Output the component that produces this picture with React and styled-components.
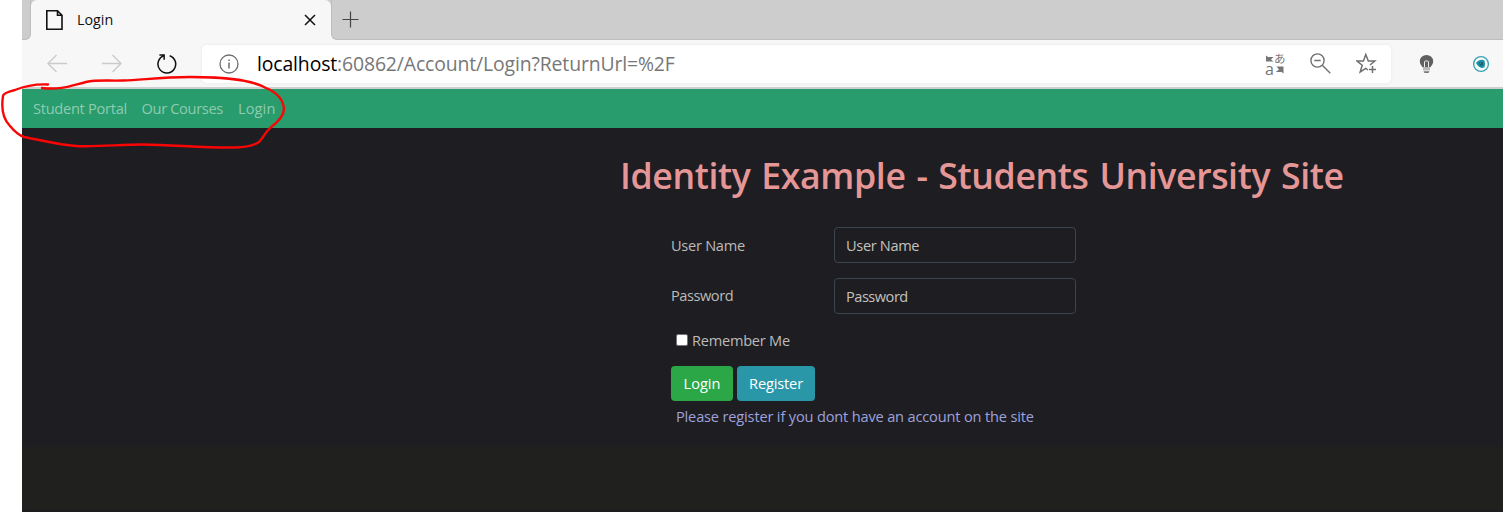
import React from 'react';
import styled, { createGlobalStyle } from 'styled-components';

const GlobalStyle = createGlobalStyle`
  * { box-sizing: border-box; }
  body { margin: 0; background: #fff; overflow: hidden; }
  #root { font-family: 'Open Sans', 'Noto Sans', sans-serif; }
`;

const Window = styled.div`
  position: relative;
  width: 1503px;
  height: 512px;
  padding-left: 22px;
  display: flex;
  flex-direction: column;
  background: #fff;
`;

const TabBar = styled.div`
  display: flex;
  flex: none;
  height: 40px;
  background: #f7f7f7;
`;

const StripStart = styled.div`
  width: 9px;
  background: #cdcdcd;
  border-bottom: 1px solid #bdbdbd;
  border-right: 1px solid #bdbdbd;
  border-bottom-right-radius: 6px;
`;

const TabSlot = styled.div`
  width: 300px;
  background: linear-gradient(#cdcdcd 0 20px, #f7f7f7 20px);
`;

const Tab = styled.div`
  height: 40px;
  display: flex;
  align-items: center;
  padding: 0 15px;
  border-radius: 6px 6px 0 0;
  background: #f7f7f7;
`;

const TabTitle = styled.span`
  flex: 1;
  margin-left: 14px;
  font-size: 14.3px;
  line-height: 20px;
  color: #111;
`;

const StripEnd = styled.div`
  flex: 1;
  display: flex;
  align-items: center;
  padding-left: 10px;
  background: #cdcdcd;
  border-bottom: 1px solid #bdbdbd;
  border-left: 1px solid #bdbdbd;
  border-bottom-left-radius: 6px;
`;

const Toolbar = styled.div`
  flex: none;
  display: flex;
  align-items: center;
  height: 49px;
  padding-left: 25px;
  background: #f7f7f7;
  border-bottom: 2px solid #cfcfcf;
`;

const NavButton = styled.span`
  display: flex;
  width: 20px;
  margin-right: ${(p) => p.$gap}px;
`;

const AddressBar = styled.div`
  width: 1189px;
  height: 38px;
  display: flex;
  align-items: center;
  padding: 0 14px 0 17px;
  border-radius: 5px;
  background: #fff;
  box-shadow: 0 0 4px rgba(0, 0, 0, 0.06);
`;

const Url = styled.span`
  flex: 1;
  margin-left: 18px;
  font-size: 19.4px;
  line-height: 26px;
  letter-spacing: -0.13px;
  white-space: nowrap;
  color: #777;
`;

const Host = styled.span`
  color: #000;
`;

const AddressActions = styled.div`
  display: flex;
  align-items: center;
  gap: 25px;
`;

const Extensions = styled.div`
  display: flex;
  align-items: center;
  margin-left: 28px;
  gap: 38px;
`;

const SiteNav = styled.nav`
  flex: none;
  display: flex;
  height: 39px;
  padding: 9px 0 0 11px;
  background: #289c6c;
`;

const NavLink = styled.a`
  width: ${(p) => p.$width}px;
  font-size: 14.6px;
  line-height: 20px;
  letter-spacing: ${(p) => p.$spacing}px;
  white-space: nowrap;
  color: #8fcbb1;
`;

const Page = styled.main`
  flex: none;
  height: 319px;
  padding-top: 23px;
  background: #1e1d22;
`;

const Title = styled.h1`
  margin: 0 0 0 598px;
  height: 48px;
  font-size: 35.7px;
  font-weight: 600;
  line-height: 48px;
  letter-spacing: -0.4px;
  word-spacing: 2px;
  white-space: nowrap;
  color: #e59797;
`;

const Form = styled.form`
  display: flex;
  flex-direction: column;
  width: 420px;
  margin: 28px 0 0 649px;
`;

const Field = styled.div`
  display: flex;
  height: 36px;
  margin-bottom: 15px;
`;

const Label = styled.label`
  width: 163px;
  padding-top: ${(p) => p.$top}px;
  font-size: 14.6px;
  line-height: 20px;
  letter-spacing: ${(p) => p.$spacing}px;
  color: #bcbbb8;
`;

const Input = styled.input`
  width: 242px;
  height: 36px;
  padding: 1px 11px;
  border: 1px solid #3a474e;
  border-radius: 4px;
  background: #1e1d22;
  outline: none;
  font-family: inherit;
  font-size: 14.6px;
  letter-spacing: ${(p) => p.$spacing}px;
  &::placeholder { color: #c4c2be; opacity: 1; }
`;

const Remember = styled.label`
  display: flex;
  height: 20px;
  margin: 1px 0 16px 5px;
  font-size: 14.6px;
  line-height: 20px;
  letter-spacing: -0.25px;
  color: #bcbbb8;
`;

const Checkbox = styled.input`
  appearance: none;
  width: 12px;
  height: 12px;
  margin: 4px 4px 0 0;
  border: 1px solid #767676;
  border-radius: 2px;
  background: #fff;
`;

const Actions = styled.div`
  display: flex;
  gap: 4px;
`;

const Button = styled.button`
  width: ${(p) => p.$width}px;
  height: 35px;
  padding: 0 0 1px;
  border: 0;
  border-radius: 4px;
  background: ${(p) => p.$color};
  color: #fff;
  font-family: inherit;
  font-size: 14.6px;
  line-height: 20px;
  letter-spacing: ${(p) => p.$spacing}px;
`;

const Hint = styled.p`
  margin: 5px 0 0 5px;
  font-size: 14.6px;
  line-height: 20px;
  letter-spacing: -0.17px;
  white-space: nowrap;
  color: #9fa2dc;
`;

const Footer = styled.footer`
  flex: 1;
  background: #20201f;
  border-bottom: 2px solid #1e1c1e;
`;

const Annotation = styled.svg`
  position: absolute;
  left: 0;
  top: 70px;
  pointer-events: none;
`;

const TranslateBox = styled.span`
  position: relative;
  display: block;
  width: 20px;
  height: 22px;
  color: #767676;
  svg { display: block; }
`;

const Glyph = styled.span`
  position: absolute;
  left: ${(p) => p.$x}px;
  top: ${(p) => p.$y}px;
  font-size: ${(p) => p.$size}px;
  line-height: 1.5;
  font-family: 'Open Sans', 'Noto Sans CJK JP', sans-serif;
`;

const PageIcon = () => (
  <svg width="17" height="20" viewBox="0 0 17 20" fill="none" stroke="#111" strokeWidth="1.6">
    <path d="M.8.8H11.5L16 5.3V19.2H.8ZM11.5 .8V5.3H16" />
  </svg>
);

const CloseIcon = () => (
  <svg width="12" height="12" viewBox="0 0 12 12" stroke="#111" strokeWidth="1.5">
    <path d="M1 1L11 11M11 1L1 11" />
  </svg>
);

const PlusIcon = () => (
  <svg width="17" height="17" viewBox="0 0 17 17" stroke="#444" strokeWidth="1.2">
    <path d="M8.5 .5V16.5M.5 8.5H16.5" />
  </svg>
);

const ArrowIcon = ({ forward }) => (
  <svg width="20" height="20" viewBox="0 0 20 20" fill="none" stroke="#cbcbcb" strokeWidth="1.4">
    <path d={forward ? 'M0 9.5H19M10.5 1L19 9.5L10.5 18' : 'M20 9.5H1M9.5 1L1 9.5L9.5 18'} />
  </svg>
);

const ReloadIcon = () => (
  <svg width="21" height="22" viewBox="0 0 21 22" fill="none" stroke="#111" strokeWidth="1.6">
    <path d="M13.3 2.3A9.3 9.3 0 1 1 6.8 2.5M2.5 1.5H7.5V6.5" />
  </svg>
);

const InfoIcon = () => (
  <svg width="20" height="20" viewBox="0 0 20 20" fill="none" stroke="#6e6e6e" strokeWidth="1.3">
    <circle cx="10" cy="10" r="9" />
    <path d="M10 8.5V14.5M10 5.5V7" strokeWidth="1.5" />
  </svg>
);

const TranslateIcon = () => (
  <TranslateBox>
    <svg width="20" height="22" viewBox="0 0 20 22" fill="currentColor">
      <path d="M1 2.5L3 4H8.5L6 6.5L8.5 8.5H1ZM18.5 13.5V20.5L16.5 19H10.7L14 16.5L11.5 13.5Z" />
    </svg>
    <Glyph $x={9} $y={-3} $size={11.5}>あ</Glyph>
    <Glyph $x={0} $y={4} $size={16}>a</Glyph>
  </TranslateBox>
);

const ZoomOutIcon = () => (
  <svg width="21" height="21" viewBox="0 0 21 21" fill="none" stroke="#707070" strokeWidth="1.4">
    <circle cx="7.5" cy="7.5" r="6.6" />
    <path d="M4.3 7.5H10.7M12.3 12.3L20.3 20.3" />
  </svg>
);

const FavoriteIcon = () => (
  <svg width="21" height="21" viewBox="0 0 21 21" fill="none" stroke="#707070" strokeWidth="1.5">
    <path d="M12 17L9.8 15.3L4.2 19L6.2 12.2L1 8H7.4L9.8 1.5L12.3 8H18.8L14 12M16.5 13V20M13 16.5H20" />
  </svg>
);

const BulbIcon = () => (
  <svg width="15" height="20" viewBox="0 0 15 20">
    <path d="M4 13.5C2.5 11.5 .8 10.2.8 7.2A6.7 6.3 0 0 1 14.2 7.2C14.2 10.2 12.5 11.5 11 13.5Z" fill="#606060" />
    <path d="M5.5 13V8Q5.5 7 6.5 7H8.5Q9.5 7 9.5 8V13" stroke="#eee" strokeWidth="1" fill="none" />
    <path d="M4 13.5H11V16.5H4Z" fill="#bbb" />
    <path d="M4.5 17.2H10.5L9.5 19H5.5Z" fill="#777" />
  </svg>
);

const EyeIcon = () => (
  <svg width="18" height="18" viewBox="0 0 18 18">
    <circle cx="9" cy="9" r="7.4" fill="#fafafa" stroke="#36a2b1" strokeWidth="1.3" />
    <path d="M4 8C5.5 5 10 3.6 12.5 5.5Q13.5 9 12.5 12.3C9 14 6 12 4 8Z" fill="#1994a5" />
    <circle cx="9.2" cy="8.8" r="2" fill="#155f73" />
    <circle cx="8.7" cy="8" r=".5" fill="#8fc9d4" />
  </svg>
);

export default function App() {
  return (
    <Window>
      <GlobalStyle />
      <TabBar>
        <StripStart />
        <TabSlot>
          <Tab>
            <PageIcon />
            <TabTitle>Login</TabTitle>
            <CloseIcon />
          </Tab>
        </TabSlot>
        <StripEnd><PlusIcon /></StripEnd>
      </TabBar>
      <Toolbar>
        <NavButton $gap={35}><ArrowIcon /></NavButton>
        <NavButton $gap={35}><ArrowIcon forward /></NavButton>
        <NavButton $gap={25}><ReloadIcon /></NavButton>
        <AddressBar>
          <InfoIcon />
          <Url><Host>localhost</Host>:60862/Account/Login?ReturnUrl=%2F</Url>
          <AddressActions>
            <TranslateIcon />
            <ZoomOutIcon />
            <FavoriteIcon />
          </AddressActions>
        </AddressBar>
        <Extensions>
          <BulbIcon />
          <EyeIcon />
        </Extensions>
      </Toolbar>
      <SiteNav>
        <NavLink $width={108.5} $spacing={-0.27}>Student Portal</NavLink>
        <NavLink $width={96.5} $spacing={-0.33}>Our Courses</NavLink>
        <NavLink $width={40} $spacing={0.1}>Login</NavLink>
      </SiteNav>
      <Page>
        <Title>Identity Example - Students University Site</Title>
        <Form>
          <Field>
            <Label $top={8} $spacing={-0.28}>User Name</Label>
            <Input placeholder="User Name" $spacing={-0.35} />
          </Field>
          <Field>
            <Label $top={7} $spacing={-0.45}>Password</Label>
            <Input placeholder="Password" $spacing={-0.5} />
          </Field>
          <Remember><Checkbox type="checkbox" />Remember Me</Remember>
          <Actions>
            <Button type="button" $width={62} $spacing={0} $color="#2ba747">Login</Button>
            <Button type="button" $width={78} $spacing={-0.15} $color="#2a97a8">Register</Button>
          </Actions>
          <Hint>Please register if you dont have an account on the site</Hint>
        </Form>
      </Page>
      <Footer />
      <Annotation width="300" height="90" viewBox="0 70 300 90" fill="none" stroke="#fa0505" strokeWidth="2.4" strokeLinecap="round" strokeLinejoin="round">
        <path d="M48 84.5C38 84 25 86 15 90Q3 93 3 96C1 109 3 119 10 126C15 132 18 135 24 137C45 141 60 145 76 146C97 147 120 144.5 143 144.5C175 145 205 148 235 147.5Q252 147 259 142C264 137 264 134 270 128C278 122 284 116 284 109C283 98 276 92 266 88C250 79 223 77 190 77C160 77 142 80 123 80.5C108 81 98 79.5 86 82C70 86 61 90 42 88" />
      </Annotation>
    </Window>
  );
}
